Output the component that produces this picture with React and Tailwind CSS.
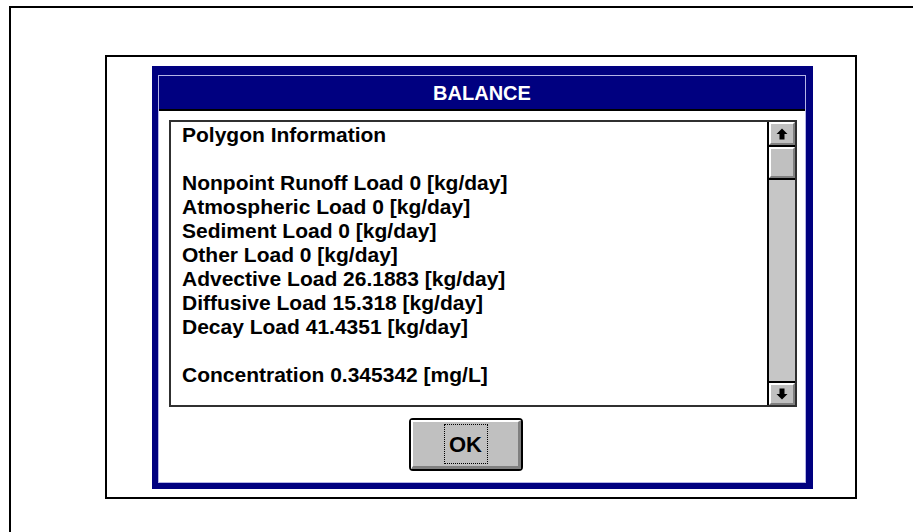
import React from "react";

const lines = [
  "Polygon Information",
  "",
  "Nonpoint Runoff Load 0 [kg/day]",
  "Atmospheric Load 0 [kg/day]",
  "Sediment Load 0 [kg/day]",
  "Other Load 0 [kg/day]",
  "Advective Load 26.1883 [kg/day]",
  "Diffusive Load 15.318 [kg/day]",
  "Decay Load 41.4351 [kg/day]",
  "",
  "Concentration 0.345342 [mg/L]",
];

// Small black arrow used on the scroll buttons
const Arrow = ({ down }) => (
  <svg width="12" height="12" viewBox="0 0 12 12" className={down ? "rotate-180" : ""}>
    <path d="M6 0.5 L11.5 6 H8.5 V11.5 H3.5 V6 H0.5 Z" fill="#000" />
  </svg>
);

// Raised 3D button face
const Bevel = ({ className = "", children }) => (
  <div
    className={`flex items-center justify-center bg-[#c0c0c0] border-t-2 border-l-2 border-t-white border-l-white border-b-2 border-r-2 border-b-[#808080] border-r-[#808080] ${className}`}
  >
    {children}
  </div>
);

const ScrollBar = () => (
  <div className="w-[28px] flex flex-col border-l-2 border-black bg-[#c4c4c4]">
    <Bevel className="h-[23px]">
      <Arrow />
    </Bevel>
    <div className="h-[2px] bg-black" />
    <Bevel className="h-[31px]" />
    <div className="h-[2px] bg-black" />
    <div className="flex-1 bg-[#c6c6c6]" />
    <div className="h-[2px] bg-black" />
    <Bevel className="h-[22px]">
      <Arrow down />
    </Bevel>
  </div>
);

const App = () => {
  return (
    <div
      className="w-[913px] h-[532px] overflow-hidden bg-white pt-[6px] pl-[9px]"
      style={{ fontFamily: '"Liberation Sans", Arial, sans-serif' }}
    >
      {/* outer page frame */}
      <div className="w-[1000px] h-[600px] border-t-2 border-l-2 border-black pt-[47px] pl-[94px]">
        {/* figure frame */}
        <div className="w-[752px] h-[444px] border-2 border-black pt-[9px] pl-[45px]">
          {/* dialog window */}
          <div className="w-[661px] h-[423px] bg-[#000080] pt-[9px] pl-[6px] pr-[7px] pb-[6px]">
            <div className="h-full border border-[#b4b4e6] flex flex-col">
              <div className="h-[35px] border-b-2 border-black flex items-center justify-center">
                <span className="text-white font-bold text-[20px] leading-none">BALANCE</span>
              </div>
              <div className="flex-1 bg-white pt-[9px] pl-[10px] pr-[8px]">
                <div className="h-[287px] border-2 border-[#303030] flex">
                  <div className="flex-1 pl-[11px] pt-px">
                    {lines.map((line, i) => (
                      <div key={i} className="h-[24px] leading-[24px] text-[21px] font-bold text-black whitespace-pre">
                        {line || " "}
                      </div>
                    ))}
                  </div>
                  <ScrollBar />
                </div>
                <div className="mt-[11px] ml-[240px] w-[114px] h-[53px] border-2 border-black rounded-[4px]">
                  <div className="h-full flex items-center justify-center bg-[#c0c0c0] border-t-2 border-l-2 border-white border-b-[3px] border-r-[3px] border-b-[#808080] border-r-[#808080]">
                    <span className="w-[44px] h-[40px] border border-dotted border-black flex items-center justify-center text-[22px] font-bold text-black">
                      OK
                    </span>
                  </div>
                </div>
              </div>
            </div>
          </div>
        </div>
      </div>
    </div>
  );
};

export default App;
